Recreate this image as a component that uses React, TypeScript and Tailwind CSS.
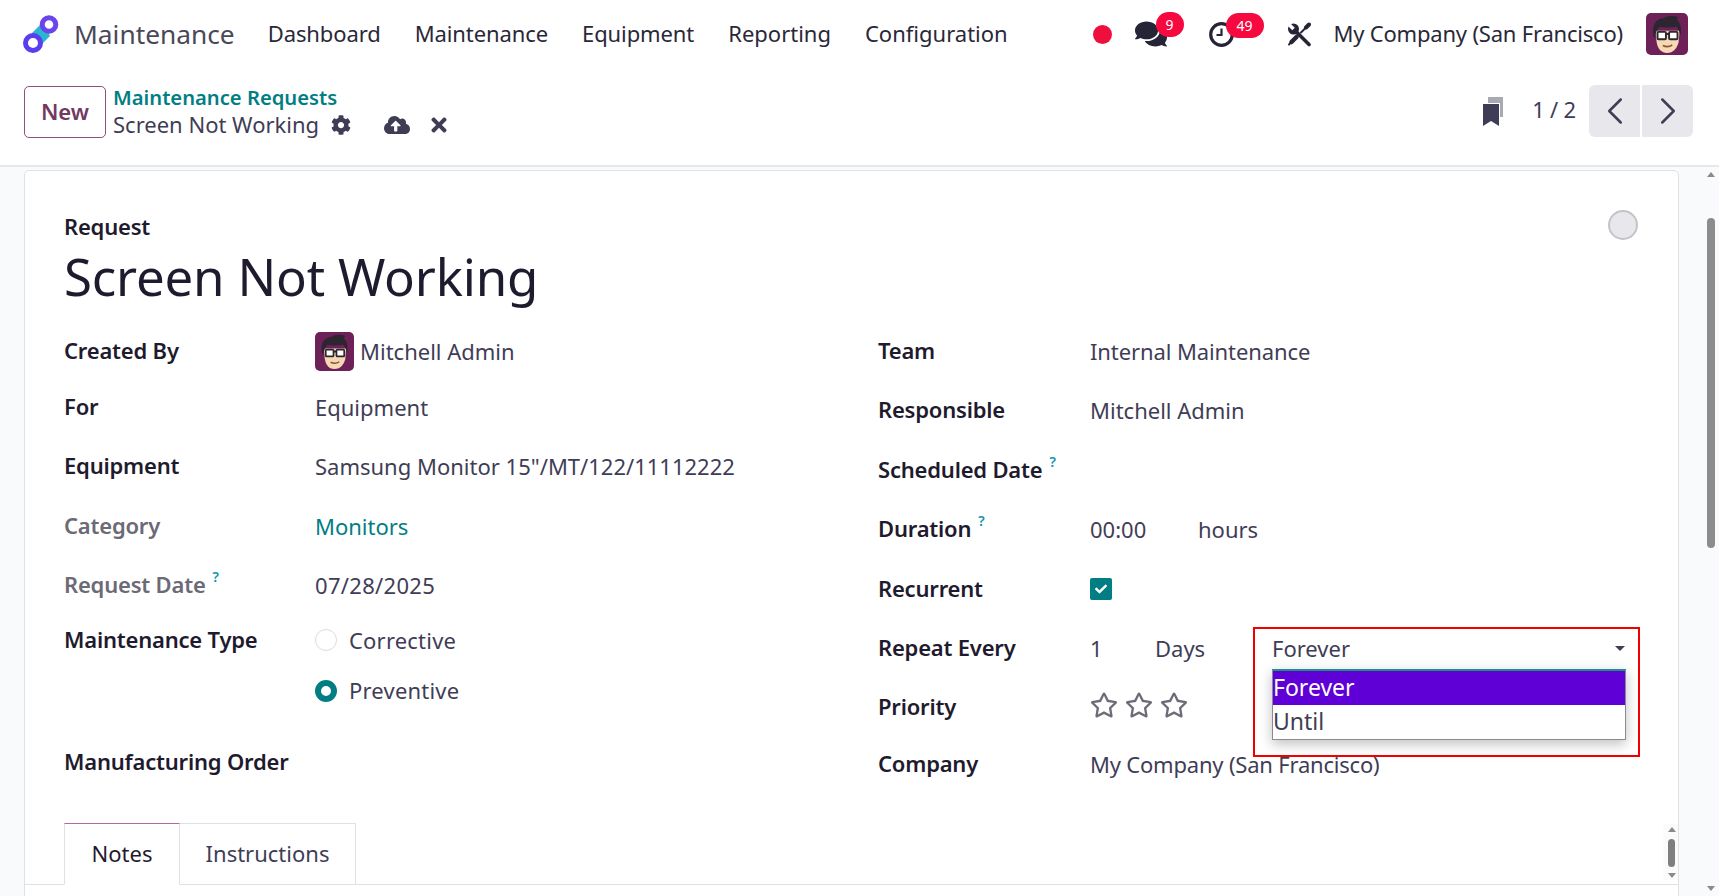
import { ChevronLeft, ChevronRight } from "lucide-react";
import { FaCheck, FaCloudUploadAlt, FaCog, FaComments, FaRegStar, FaTimes } from "react-icons/fa";
import type { ReactNode } from "react";

const Avatar = ({ size }: { size: string }) => (
    <svg viewBox="0 0 40 40" className={`${size} rounded-[5px] shrink-0`}>
        <rect width="40" height="40" fill="#6d2158" />
        <path d="M10 27c1 8 5 11 10 11s9-3 11-10l1-11H9z" fill="#f6d9b4" />
        <path d="M8 24C4 12 10 5 17 5c2-2 9-3 14-1-1 1-2 2-1 3 3 3 4 8 3 15-1-4-2-7-4-9-6 1-12 1-16 0-2 2-4 6-5 11z" fill="#2b2630" />
        <rect x="11" y="18" width="8" height="7" rx="1" fill="#fff" stroke="#2b2630" strokeWidth="1.800" />
        <rect x="22" y="18" width="8" height="7" rx="1" fill="#fff" stroke="#2b2630" strokeWidth="1.800" />
        <path d="M19 20h3" stroke="#2b2630" strokeWidth="1.800" />
        <path d="M16 31c3 1.500 6 1.500 9-.5" fill="none" stroke="#8a5535" strokeWidth="1.500" />
    </svg>
);

const Logo = () => (
    <svg viewBox="0 0 36 38" className="w-[36px] h-[38px] shrink-0">
        <path d="M9 18l11-11 7 14-11 11z" fill="#2ab5d1" />
        <circle cx="10" cy="28" r="7.500" fill="#fff" stroke="#5b3df0" strokeWidth="5" />
        <circle cx="26" cy="9.500" r="6.800" fill="#fff" stroke="#6a45ee" strokeWidth="5" />
    </svg>
);

const Clock = () => (
    <svg viewBox="0 0 25 25" className="w-[25px] h-[25px] shrink-0" fill="none" stroke="#262437" strokeWidth="3.200">
        <circle cx="12.500" cy="12.500" r="10.800" />
        <path d="M12.500 6.500v6.500h-5" strokeWidth="2.200" />
    </svg>
);

const Tools = () => (
    <svg viewBox="0 0 24 24" className="w-[24px] h-[25px] shrink-0" fill="none" strokeLinecap="round">
        <path d="M8 8l14 14" stroke="#262437" strokeWidth="3.600" />
        <circle cx="6.500" cy="6.500" r="5.500" fill="#262437" />
        <path d="M0 0l6.500 6.500" stroke="#fff" strokeWidth="3.600" strokeLinecap="butt" />
        <path d="M19 5l3-3" stroke="#262437" strokeWidth="4" />
        <path d="M19 5l-5 5" stroke="#262437" strokeWidth="2" />
        <path d="M9.500 14.500l-5 5" stroke="#262437" strokeWidth="4.500" />
        <path d="M4 20l-2 2" stroke="#262437" strokeWidth="2" />
    </svg>
);

const Bookmarks = () => (
    <svg viewBox="0 0 20 29" className="w-[20px] h-[29px] shrink-0 -mt-[4px]">
        <path d="M5 0h15v20h-3V6H5z" fill="#a9a9b2" />
        <path d="M0 7h16v22l-8-5-8 5z" fill="#3f3d56" />
    </svg>
);

const Help = () => <sup className="text-[#0f94b0] text-[14px] font-semibold ml-[7px] -top-[11px] relative">?</sup>;

const Label = ({ children, muted }: { children: ReactNode; muted?: boolean }) => (
    <span className={`font-semibold tracking-[-0.2px] ${muted ? "text-[#6b6a76]" : "text-[#1f1b2e]"}`}>{children}</span>
);

const Row = ({ label, h, w, children }: { label: ReactNode; h: string; w: string; children?: ReactNode }) => (
    <div className={`flex items-center ${h}`}>
        <div className={`${w} shrink-0 -mt-[2px]`}>{label}</div>
        <div className="flex items-center text-[#3f3d56]">{children}</div>
    </div>
);

export default function App() {
    return (
        <div className="h-[896px] w-[1719px] overflow-hidden flex flex-col bg-[#f9fafb] text-[22px] text-[#3f3d56] font-['Noto_Sans',sans-serif]">
            <header className="h-[68px] bg-white flex items-center pl-[23px] pr-[31px] shrink-0">
                <Logo />
                <span className="text-[26.3px] text-[#4a4858] ml-[15px] mr-[33px] mt-[2px]">Maintenance</span>
                <nav className="flex gap-[34px] text-[#2a2838] -mt-[2px]">
                    <span className="tracking-[-0.1px]">Dashboard</span>
                    <span className="tracking-[-0.1px]">Maintenance</span>
                    <span className="tracking-[-0.1px]">Equipment</span>
                    <span>Reporting</span>
                    <span>Configuration</span>
                </nav>
                <div className="ml-auto flex items-center">
                    <span className="w-[19px] h-[19px] rounded-full bg-[#ef0f3f]" />
                    <div className="relative ml-[23px]">
                        <FaComments className="w-[32px] h-[32px] text-[#262437]" />
                        <span className="absolute -top-[6px] left-[21px] h-[25px] w-[28px] rounded-full bg-[#f5093f] text-white text-[14px] flex items-center justify-center">9</span>
                    </div>
                    <div className="relative ml-[42px]">
                        <Clock />
                        <span className="absolute -top-[9px] left-[17px] h-[25px] w-[38px] rounded-full bg-[#f5093f] text-white text-[14px] flex items-center justify-center">49</span>
                    </div>
                    <div className="ml-[53px]"><Tools /></div>
                    <span className="ml-[23px] mr-[23px] text-[#2a2838] tracking-[-0.2px] -mt-[2px]">My Company (San Francisco)</span>
                    <Avatar size="w-[42px] h-[42px]" />
                </div>
            </header>

            <div className="h-[99px] bg-white border-b-2 border-[#e5e7eb] shrink-0 flex items-center pl-[24px] pr-[26px] pb-[7px]">
                <button className="w-[82px] h-[52px] rounded-[5px] border border-[#8f4f80] text-[#71395f] font-semibold -mt-[2px] pb-[2px]">New</button>
                <div className="ml-[7px] -mt-[4px]">
                    <div className="text-[#017e84] font-semibold text-[20.2px] leading-[27px]">Maintenance Requests</div>
                    <div className="flex items-center leading-[27px]">
                        <span>Screen Not Working</span>
                        <FaCog className="w-[20px] h-[20px] ml-[12px]" />
                        <FaCloudUploadAlt className="w-[26px] h-[26px] ml-[33px]" />
                        <FaTimes className="w-[22px] h-[22px] ml-[18px]" />
                    </div>
                </div>
                <div className="ml-auto flex items-center">
                    <Bookmarks />
                    <span className="ml-[29px] mr-[13px] tracking-[-0.2px] -mt-[8px]">1 / 2</span>
                    <div className="flex gap-[2px] -mt-[4px]">
                        <div className="w-[51px] h-[52px] bg-[#e7e7ec] rounded-l-[6px] flex items-center justify-center"><ChevronLeft className="w-[46px] h-[46px] shrink-0" strokeWidth={1.3} /></div>
                        <div className="w-[51px] h-[52px] bg-[#e7e7ec] rounded-r-[6px] flex items-center justify-center"><ChevronRight className="w-[46px] h-[46px] shrink-0" strokeWidth={1.3} /></div>
                    </div>
                </div>
            </div>

            <div className="flex flex-1 min-h-0 relative pt-[3px]">
                <main className="ml-[24px] w-[1655px] h-[760px] bg-white border border-[#dee2e6] rounded-t-[5px] relative pt-[42px] overflow-hidden">
                    <div className="absolute right-[40px] top-[39px] w-[30px] h-[30px] rounded-full bg-[#e7e7ec] border-2 border-[#c4c4c8]" />
                    <div className="px-[39px]">
                        <div className="font-semibold text-[#1f1b2e] leading-[26px] tracking-[-0.2px]">Request</div>
                        <h1 className="text-[51px] text-[#1f1b2e] leading-[62px] tracking-[-0.2px] mt-[6px] mb-[16px]">Screen Not Working</h1>
                        <div className="grid grid-cols-[814px_1fr]">
                            <div>
                                <Row w="w-[251px]" h="h-[56px]" label={<Label>Created By</Label>}>
                                    <Avatar size="w-[39px] h-[39px]" />
                                    <span className="ml-[6px]">Mitchell Admin</span>
                                </Row>
                                <Row w="w-[251px]" h="h-[56px]" label={<Label>For</Label>}>Equipment</Row>
                                <Row w="w-[251px]" h="h-[62px]" label={<Label>Equipment</Label>}>Samsung Monitor 15"/MT/122/11112222</Row>
                                <Row w="w-[251px]" h="h-[58px]" label={<Label muted>Category</Label>}><span className="text-[#017e84]">Monitors</span></Row>
                                <Row w="w-[251px]" h="h-[61px]" label={<Label muted>Request Date<Help /></Label>}><span className="tracking-[0.3px]">07/28/2025</span></Row>
                                <Row w="w-[251px]" h="h-[48px]" label={<Label>Maintenance Type</Label>}>
                                    <span className="w-[22px] h-[22px] rounded-full border border-[#dcdce0] mr-[12px]" />
                                    <span className="tracking-[0.2px]">Corrective</span>
                                </Row>
                                <Row w="w-[251px]" h="h-[53px]" label="">
                                    <span className="w-[22px] h-[22px] rounded-full border-[6px] border-[#017e84] mr-[12px]" />
                                    <span className="tracking-[0.2px]">Preventive</span>
                                </Row>
                                <Row w="w-[251px]" h="h-[90px]" label={<Label>Manufacturing Order</Label>} />
                            </div>
                            <div>
                                <Row w="w-[212px]" h="h-[56px]" label={<Label>Team</Label>}><span className="tracking-[-0.1px]">Internal Maintenance</span></Row>
                                <Row w="w-[212px]" h="h-[62px]" label={<Label>Responsible</Label>}>Mitchell Admin</Row>
                                <Row w="w-[212px]" h="h-[58px]" label={<Label>Scheduled Date<Help /></Label>} />
                                <Row w="w-[212px]" h="h-[60px]" label={<Label>Duration<Help /></Label>}>
                                    <span className="w-[108px]">00:00</span>hours
                                </Row>
                                <Row w="w-[212px]" h="h-[60px]" label={<Label>Recurrent</Label>}>
                                    <span className="w-[22px] h-[22px] bg-[#017e84] rounded-[2px] flex items-center justify-center"><FaCheck className="w-[12px] h-[12px] text-white" /></span>
                                </Row>
                                <Row w="w-[212px]" h="h-[58px]" label={<Label>Repeat Every</Label>}>
                                    <span className="w-[65px]">1</span>
                                    <span className="w-[117px]">Days</span>
                                    <div className="w-[353px] flex justify-between items-center">
                                        <span>Forever</span>
                                        <span className="border-x-[5px] border-t-[5px] border-x-transparent border-t-[#3f3d56]" />
                                    </div>
                                </Row>
                                <Row w="w-[212px]" h="h-[60px]" label={<Label>Priority</Label>}>
                                    <span className="flex gap-[7px] -mt-[4px]">
                                        <FaRegStar className="w-[28px] h-[28px] text-[#6c6b77]" />
                                        <FaRegStar className="w-[28px] h-[28px] text-[#6c6b77]" />
                                        <FaRegStar className="w-[28px] h-[28px] text-[#6c6b77]" />
                                    </span>
                                </Row>
                                <Row w="w-[212px]" h="h-[54px]" label={<Label>Company</Label>}><span className="tracking-[-0.2px]">My Company (San Francisco)</span></Row>
                            </div>
                        </div>
                    </div>
                    <div className="mt-[16px] px-[39px] border-b border-[#dee2e6] flex h-[62px]">
                        <div className="w-[116px] border border-[#dee2e6] border-t-[#b06a9d] border-b-white -mb-[1px] flex items-center justify-center text-[#1f1b2e] pb-[2px]">Notes</div>
                        <div className="w-[176px] border border-l-0 border-[#dee2e6] -mb-[1px] flex items-center justify-center pb-[2px]">Instructions</div>
                    </div>

                    {/* inner scrollbar */}
                    <div className="absolute left-[1638px] top-[653px] w-[17px] h-[56px] bg-[#fbfbfb] flex flex-col items-center justify-between">
                        <span className="border-x-[4px] border-b-[5px] border-x-transparent border-b-[#8a8a8a] mt-[3px]" />
                        <span className="w-[7px] h-[28px] rounded-full bg-[#7f7f7f]" />
                        <span className="border-x-[4px] border-t-[5px] border-x-transparent border-t-[#8a8a8a] mb-[2px]" />
                    </div>
                </main>

                {/* dropdown list over the form */}
                <div className="absolute left-[1272px] top-[502px] w-[354px] bg-white text-[23px] border border-[#8a8a94] border-t-[#1f8f8a] border-t-2 shadow-[0_4px_12px_rgba(0,0,0,0.25)]">
                    <div className="h-[34px] bg-[#5f00d6] text-white leading-[32px]">Forever</div>
                    <div className="h-[34px] leading-[32px]">Until</div>
                </div>
                {/* annotation */}
                <div className="absolute left-[1253px] top-[460px] w-[387px] h-[130px] border-2 border-[#f00000] pointer-events-none" />

                {/* page scrollbar */}
                <div className="absolute right-0 top-0 bottom-0 w-[17px] flex flex-col items-center justify-between">
                    <span className="border-x-[4px] border-b-[5px] border-x-transparent border-b-[#8a8a8a] mt-[5px]" />
                    <span className="absolute top-[51px] w-[8px] h-[330px] rounded-full bg-[#8c8c8c]" />
                    <span className="border-x-[4px] border-t-[5px] border-x-transparent border-t-[#8a8a8a] mb-[5px]" />
                </div>
            </div>
        </div>
    );
}
